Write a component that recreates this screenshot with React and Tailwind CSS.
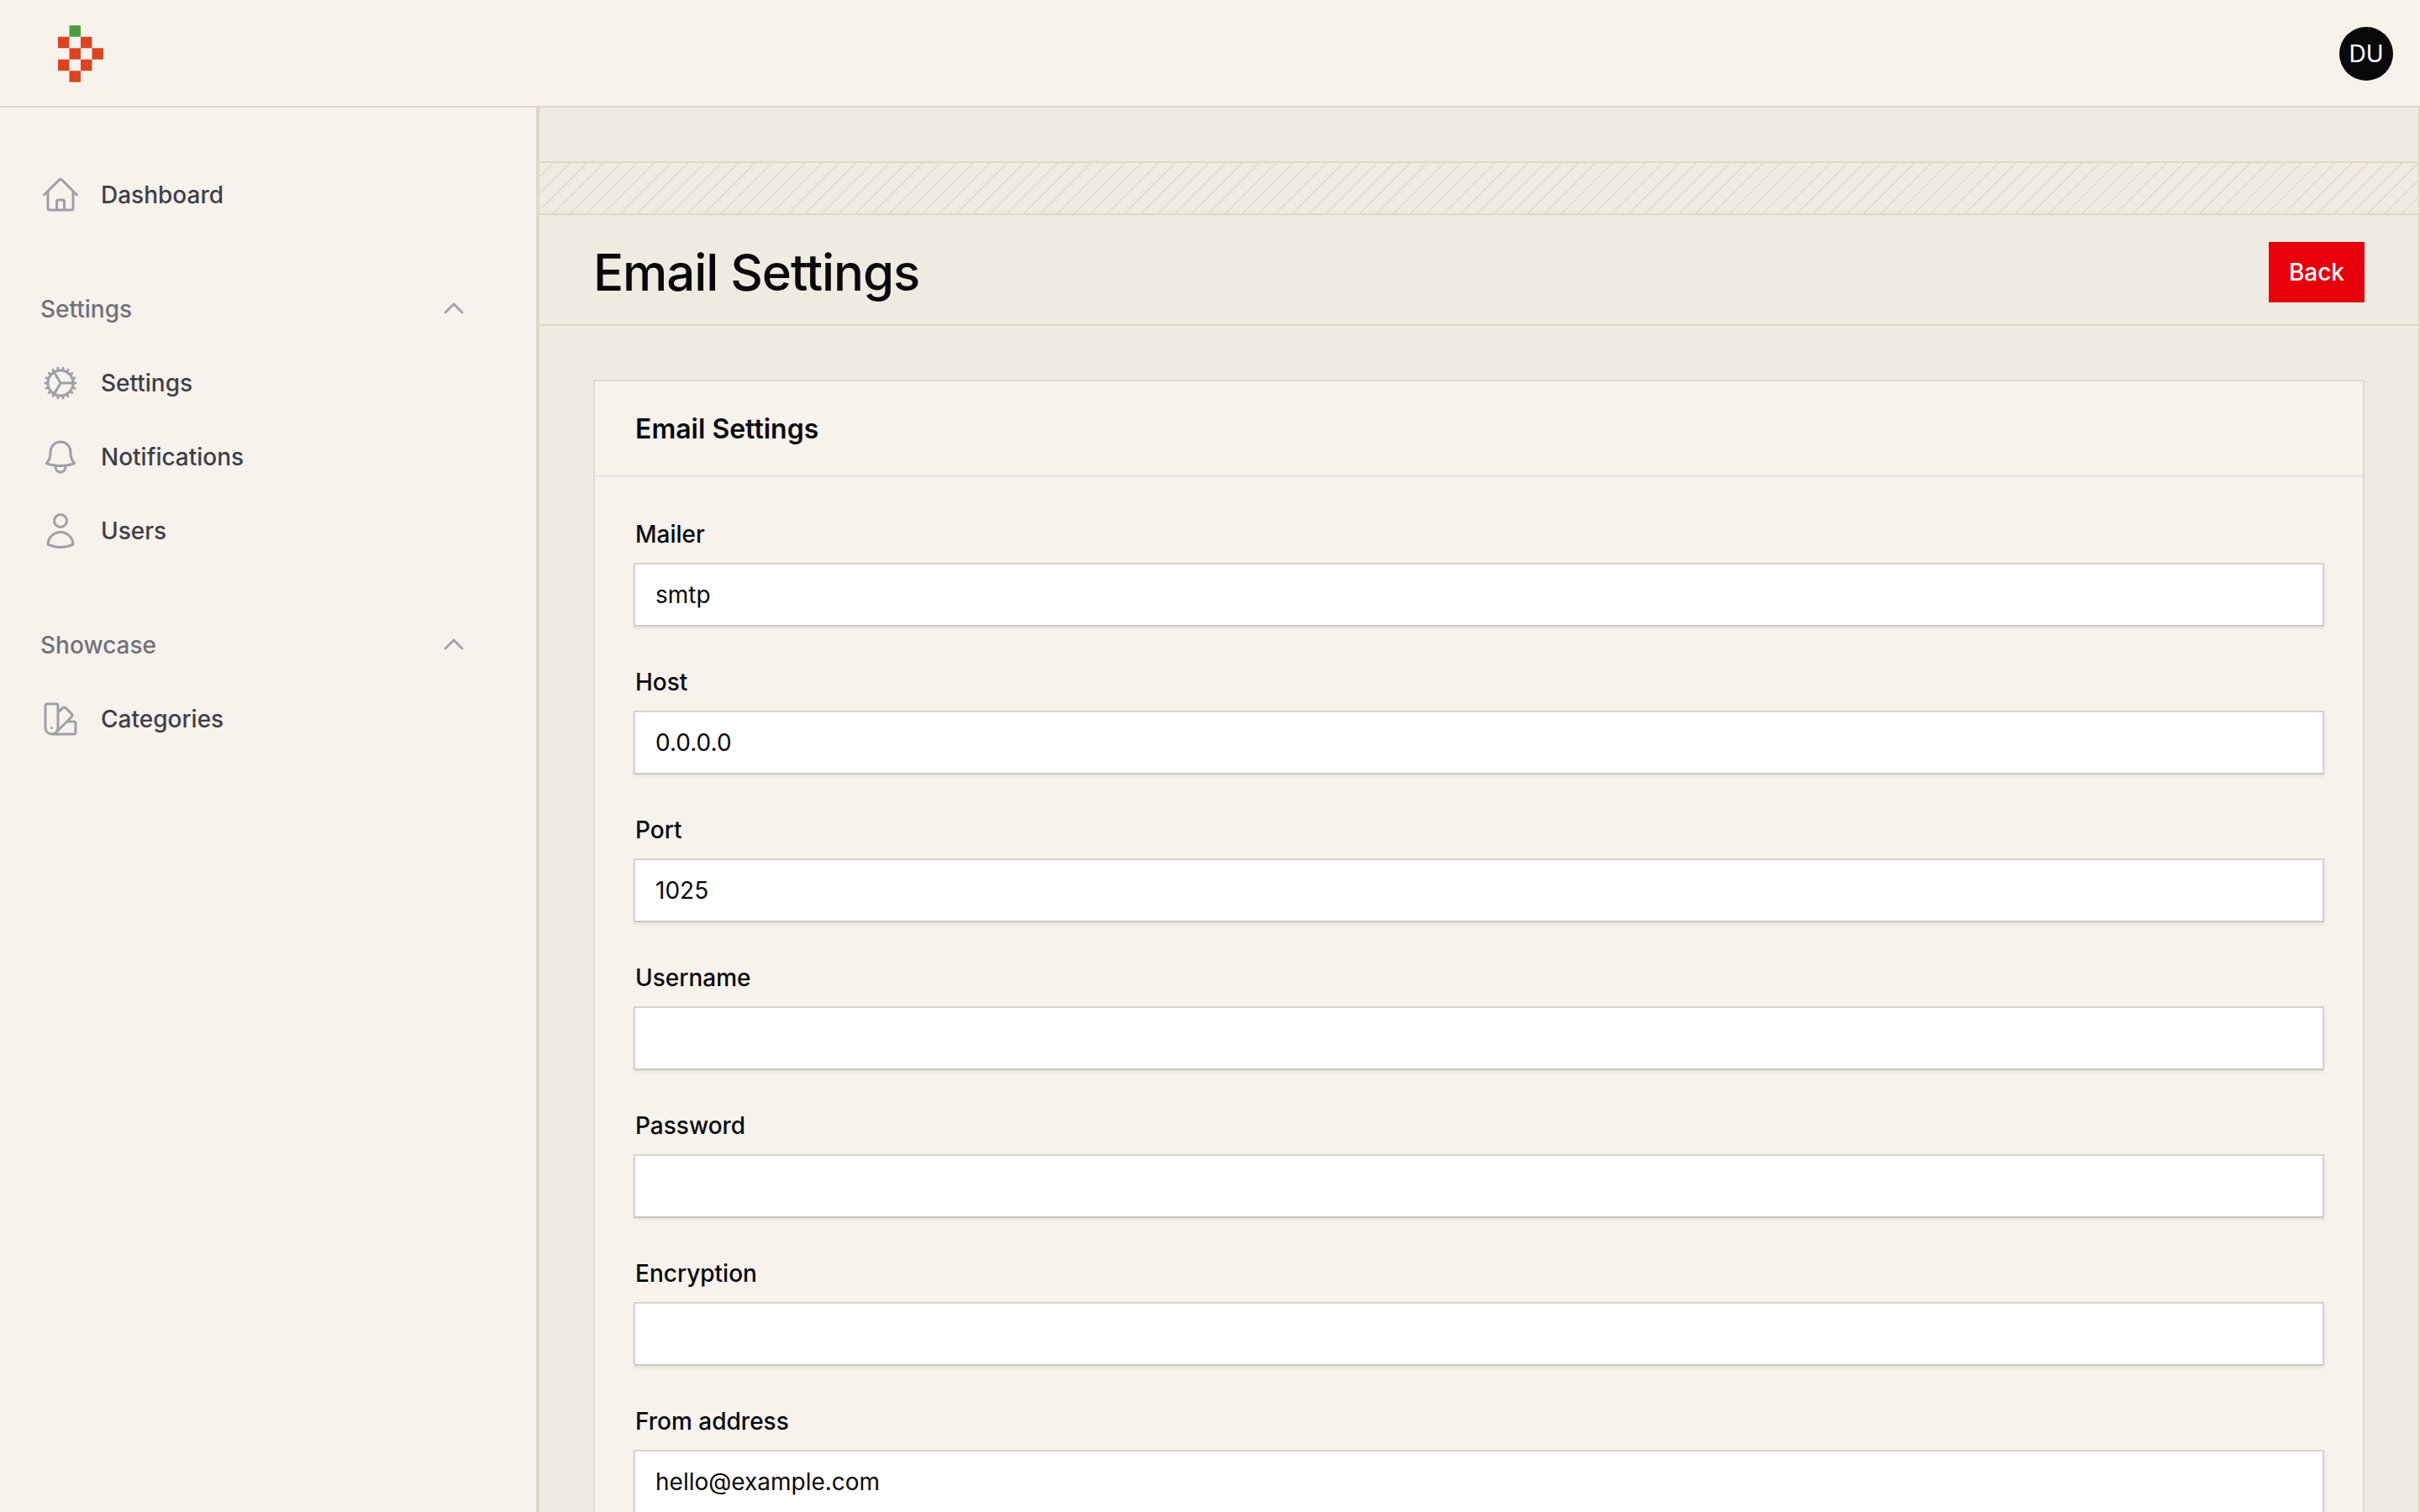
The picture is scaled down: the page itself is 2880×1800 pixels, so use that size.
import { HiOutlineBell, HiOutlineChevronUp, HiOutlineCog, HiOutlineHome, HiOutlineSwatch, HiOutlineUser } from 'react-icons/hi2';

const fields = [
  { label: 'Mailer', value: 'smtp' },
  { label: 'Host', value: '0.0.0.0' },
  { label: 'Port', value: '1025' },
  { label: 'Username', value: '' },
  { label: 'Password', value: '' },
  { label: 'Encryption', value: '' },
  { label: 'From address', value: 'hello@example.com' },
];

function Logo() {
  const red = [[0, 1], [2, 1], [1, 2], [3, 2], [0, 3], [2, 3], [1, 4]];
  return (
    <svg className="mt-[2px]" width="54" height="68" viewBox="0 0 4 5">
      <rect x="1" y="0" width="1" height="1" fill="#4f9b3f" />
      {red.map(([x, y]) => (
        <rect key={`${x}-${y}`} x={x} y={y} width="1" height="1" fill="#d94522" />
      ))}
    </svg>
  );
}

function NavItem({ icon: Icon, label }) {
  return (
    <a className="flex items-center gap-6 h-[88px] pl-[48px] text-[28px] font-medium text-zinc-700">
      <Icon className="w-12 h-12 text-zinc-400" />
      <span>{label}</span>
    </a>
  );
}

function NavGroup({ title, children }) {
  return (
    <div className="mt-[48px]">
      <div className="flex items-center justify-between h-[88px] pl-[48px] pr-[82px] text-[28px] font-medium text-zinc-500">
        <span>{title}</span>
        <HiOutlineChevronUp strokeWidth={2} className="w-8 h-8 mb-[2px] text-zinc-400" />
      </div>
      {children}
    </div>
  );
}

export default function App() {
  return (
    <div className="flex flex-col h-screen overflow-hidden bg-[#f7f2ec] text-[#09090b] font-['Inter',sans-serif]">
      {/* Top bar */}
      <header className="flex items-center justify-between h-[128px] shrink-0 pl-[69px] pr-[32px] border-b-2 border-[#e0d8c9]">
        <Logo />
        <div className="flex items-center justify-center w-16 h-16 mt-[2px] rounded-full bg-[#09090b] text-[28px] text-white">DU</div>
      </header>

      <div className="flex flex-1 min-h-0">
        {/* Sidebar */}
        <aside className="w-[640px] shrink-0 pt-[60px] border-r-2 border-[#e0d8c9]">
          <NavItem icon={HiOutlineHome} label="Dashboard" />
          <NavGroup title="Settings">
            <NavItem icon={HiOutlineCog} label="Settings" />
            <NavItem icon={HiOutlineBell} label="Notifications" />
            <NavItem icon={HiOutlineUser} label="Users" />
          </NavGroup>
          <NavGroup title="Showcase">
            <NavItem icon={HiOutlineSwatch} label="Categories" />
          </NavGroup>
        </aside>

        {/* Main */}
        <main className="flex-1 min-w-0 overflow-hidden bg-[#f0ebe1] border-x-2 border-[#e0d8c9]">
          <div className="h-[64px]" />
          <div className="h-[64px] border-y-2 border-[#e0d8c9] bg-[repeating-linear-gradient(135deg,transparent_0,transparent_10.67px,#e2dacb_10.67px,#e2dacb_12.67px,transparent_12.67px,transparent_14.142px)]" />
          <div className="flex items-center justify-between h-[132px] pt-[6px] px-[64px] border-b-2 border-[#e0d8c9]">
            <h1 className="text-[60px] leading-none font-medium tracking-[-1.1px]">Email Settings</h1>
            <button className="h-[72px] px-6 bg-[#e7000b] text-[28px] font-medium text-white">Back</button>
          </div>

          <div className="px-[64px] pt-[64px]">
            <div className="bg-[#f7f2ec] border-2 border-[#e0d8c9]">
              <div className="flex items-center h-[114px] pt-[2px] px-[48px] border-b-2 border-[#e4e4e7]">
                <h2 className="text-[32px] font-semibold">Email Settings</h2>
              </div>
              <div className="flex flex-col gap-[46px] px-[46px] pt-[48px] pb-[48px]">
                {fields.map((f) => (
                  <label key={f.label} className="block">
                    <span className="block pl-[2px] mb-[14px] text-[28px] leading-[40px] font-medium">{f.label}</span>
                    <input
                      readOnly
                      value={f.value}
                      className="block w-full h-[76px] px-6 bg-white border-2 border-[#d6d3cc] border-b-[#cbc8c1] shadow-[0_2px_4px_rgba(0,0,0,0.08)] text-[28px] outline-none"
                    />
                  </label>
                ))}
              </div>
            </div>
          </div>
        </main>
      </div>
    </div>
  );
}
